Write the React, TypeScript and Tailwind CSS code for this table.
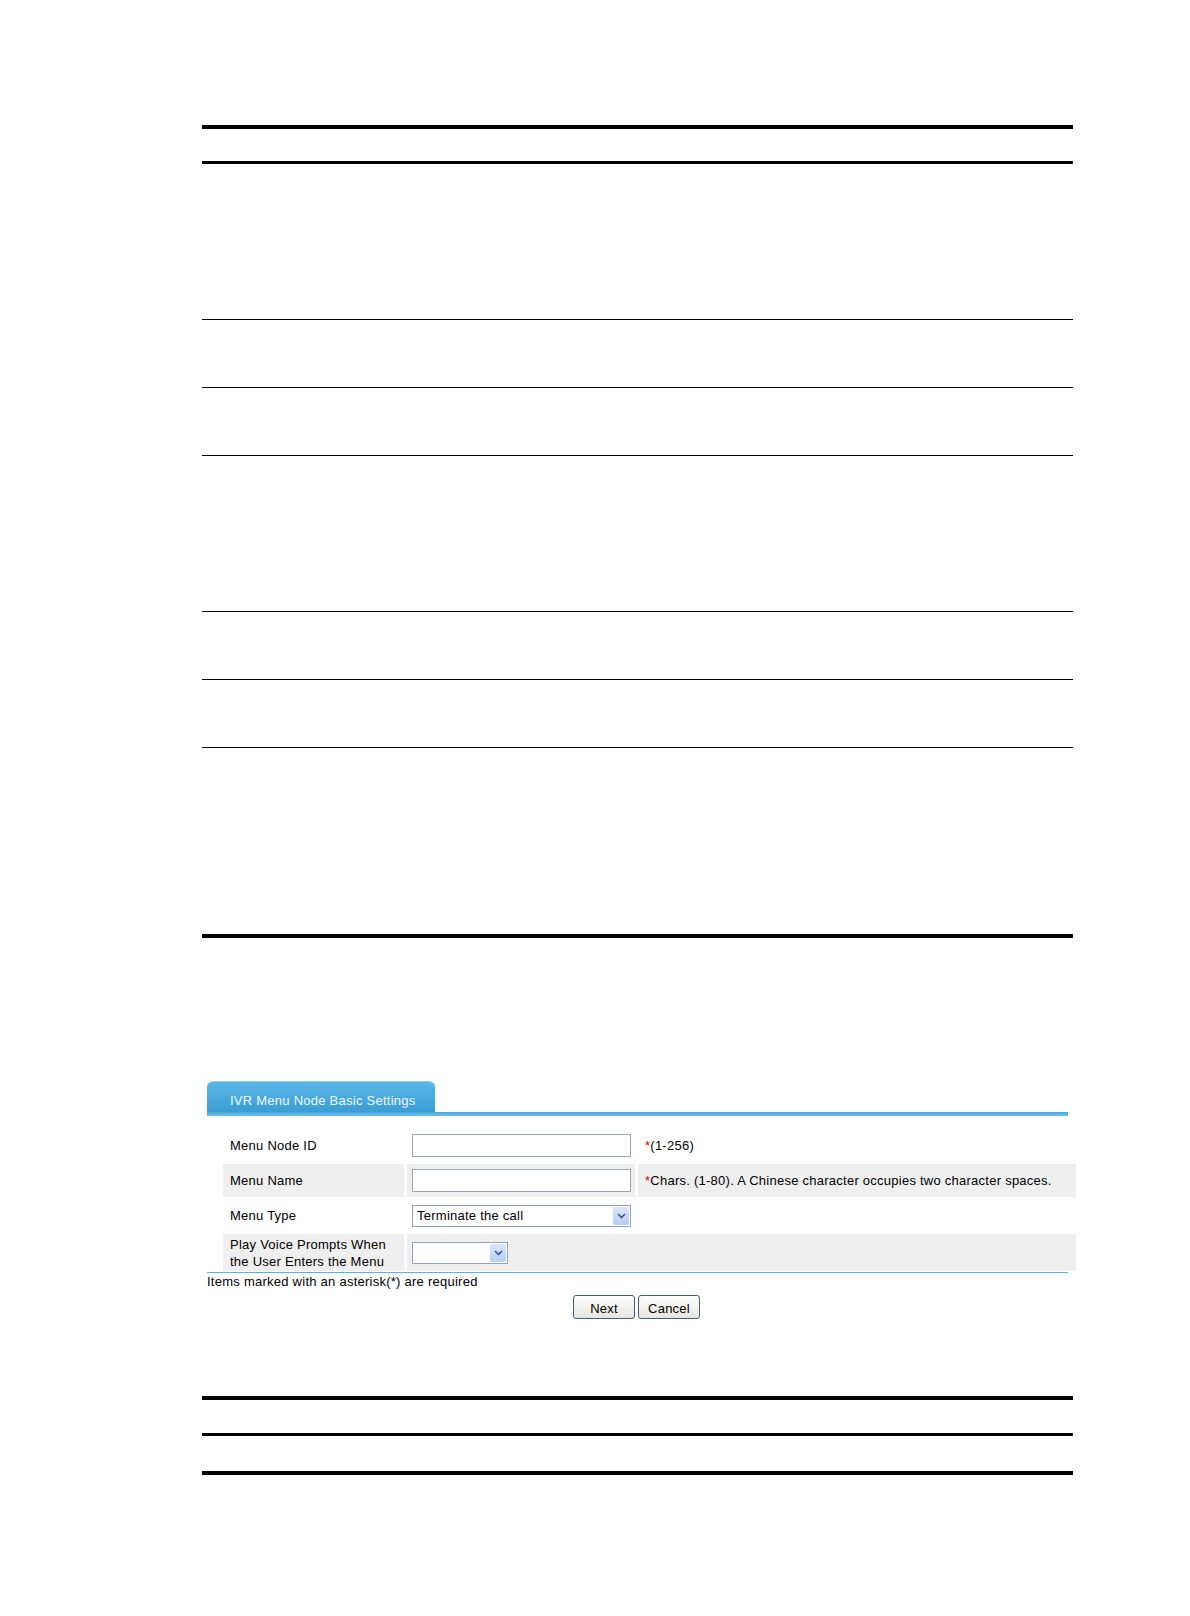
import React from 'react'

function Rule({ h }: { h: string }) {
  return <div className={`w-[871px] bg-black ${h}`} />
}

function Chevron() {
  return (
    <svg width="9" height="6" viewBox="0 0 9 6" fill="none" stroke="#3d5a8a" strokeWidth="1.6">
      <path d="M1 1l3.5 3.5L8 1" />
    </svg>
  )
}

function Select({ value, width }: { value?: string; width: string }) {
  return (
    <div className={`flex h-[22px] items-center border border-[#8fa3bd] bg-white ${width}`}>
      <span className="flex-1 truncate pl-[4px] leading-[20px]">{value}</span>
      <span className="mr-[1px] flex h-[18px] w-[16px] items-center justify-center rounded-[2px] bg-gradient-to-b from-[#dbe6fc] to-[#b7cbf5]">
        <Chevron />
      </span>
    </div>
  )
}

function TextInput() {
  return <div className="h-[23px] w-[219px] border border-[#9aa6b4] bg-white" />
}

function Button({ label }: { label: string }) {
  return (
    <button className="h-[24px] w-[62px] rounded-[3px] border border-[#3f5f80] bg-gradient-to-b from-white to-[#e6e5de] pt-[3px] text-[13px] leading-[18px] text-black">
      {label}
    </button>
  )
}

export default function App() {
  const top = [
    { h: 'h-[155px]' },
    { h: 'h-[67px]' },
    { h: 'h-[67px]' },
    { h: 'h-[155px]' },
    { h: 'h-[67px]' },
    { h: 'h-[67px]' },
  ]

  return (
    <div className="min-h-[1616px] w-[1190px] bg-white font-['Liberation_Sans',Arial,sans-serif] text-[13px] tracking-[0.25px] text-black">
      <div className="pl-[202px] pt-[125px]">
        {/* top table */}
        <Rule h="h-[4px]" />
        <div className="h-[32px]" />
        <Rule h="h-[3px]" />
        {top.map((r, i) => (
          <div key={i}>
            <div className={r.h} />
            <Rule h="h-[1px]" />
          </div>
        ))}
        <div className="h-[186px]" />
        <Rule h="h-[4px]" />
      </div>

      {/* form screenshot */}
      <div className="ml-[207px] mt-[143px] w-[870px]">
        <div className="flex h-[31px] w-[228px] items-center rounded-t-[6px] border-t border-[#8fd0f0] bg-gradient-to-b from-[#5bb6e6] to-[#3a9dd5] pl-[23px] pt-[7px] text-[#eef7fc]">
          IVR Menu Node Basic Settings
        </div>
        <div className="h-[4px] w-[861px] bg-gradient-to-b from-[#4aa8dc] to-[#6cc0ea]" />

        <div className="ml-[16px] mt-[13px] grid grid-cols-[181px_228px_438px] gap-x-[3px] gap-y-[2px]">
          <div className="flex h-[33px] items-center pl-[7px]">Menu Node ID</div>
          <div className="flex items-center pl-[5px]"><TextInput /></div>
          <div className="flex items-center pl-[7px]"><span className="text-[#e00000]">*</span>(1-256)</div>

          <div className="flex h-[33px] items-center bg-[#efefef] pl-[7px]">Menu Name</div>
          <div className="flex items-center bg-[#efefef] pl-[5px]"><TextInput /></div>
          <div className="flex items-center bg-[#efefef] pl-[7px]">
            <span className="text-[#e00000]">*</span>Chars. (1-80). A Chinese character occupies two character spaces.
          </div>

          <div className="flex h-[33px] items-center pl-[7px]">Menu Type</div>
          <div className="flex items-center pl-[5px]"><Select value="Terminate the call" width="w-[219px]" /></div>
          <div />

          <div className="flex h-[37px] flex-col justify-center bg-[#efefef] pl-[7px] pt-[1px] leading-[17px]">
            <span>Play Voice Prompts When</span>
            <span>the User Enters the Menu</span>
          </div>
          <div className="col-span-2 flex items-center bg-[#efefef] pl-[5px]"><Select width="w-[96px]" /></div>
        </div>

        <div className="mt-[1px] h-[1px] w-[861px] bg-[#5ab4e0]" />
        <div className="leading-[17px]">Items marked with an asterisk(*) are required</div>
        <div className="mt-[5px] flex gap-[3px] pl-[366px]">
          <Button label="Next" />
          <Button label="Cancel" />
        </div>
      </div>

      {/* bottom table */}
      <div className="pl-[202px] pt-[77px]">
        <Rule h="h-[4px]" />
        <div className="h-[33px]" />
        <Rule h="h-[3px]" />
        <div className="h-[35px]" />
        <Rule h="h-[4px]" />
      </div>
    </div>
  )
}
